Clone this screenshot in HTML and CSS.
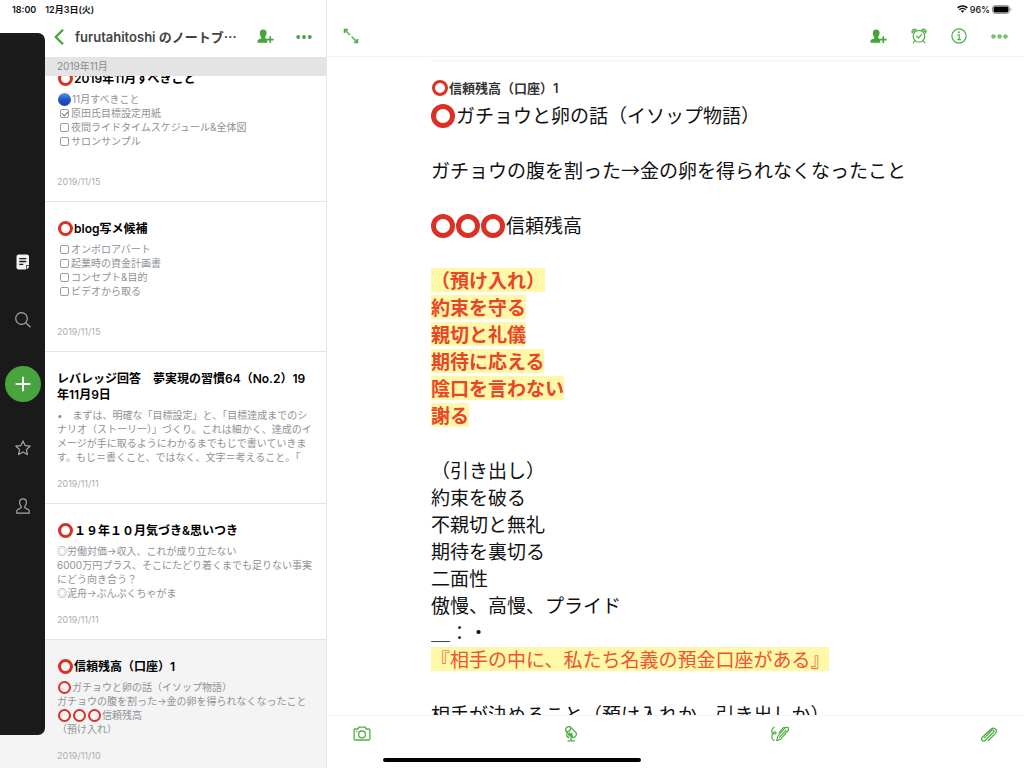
FILE: index.html
```html
<!DOCTYPE html>
<html lang="ja">
<head>
    <meta charset="UTF-8">
    <meta name="viewport" content="width=device-width, initial-scale=1.0">
    <title>信頼残高（口座）1</title>
    <link rel="stylesheet" href="styles.css">
</head>
<body>

    <div class="app">
        <div class="status-bar">
            <span class="status-time">18:00</span>
            <span>12月3日(火)</span>
            <span class="status-right">
                <svg width="11" height="8" viewBox="0 0 11 8" fill="none" stroke="#111" stroke-width="1.5">
                    <path d="M0.6 2.9a7 7 0 0 1 9.8 0M2.3 4.8a4.6 4.6 0 0 1 6.4 0"/>
                    <path d="M5.5 7.8L3.8 6.1a2.5 2.5 0 0 1 3.4 0z" fill="#111" stroke="none"/>
                </svg>
                <span>96%</span>
                <svg width="20" height="9" viewBox="0 0 20 9">
                    <rect x="0.5" y="0.5" width="17" height="8" rx="2.4" fill="none" stroke="#999"/>
                    <rect x="1.5" y="1.5" width="15" height="6" rx="1.4" fill="#000"/>
                    <path d="M18.5 3v3q1-.4 1-1.5t-1-1.5z" fill="#999"/>
                </svg>
            </span>
        </div>

        <div class="rail-column">
            <nav class="rail">
                <button class="rail-btn" aria-label="ノート">
                    <svg width="14" height="16" viewBox="0 0 14 16">
                        <path d="M2.5 0.5h8.500a2 2 0 0 1 2 2v8.700h-3v4.300H2.500a2 2 0 0 1-2-2v-11a2 2 0 0 1 2-2z" fill="#f2f2f2"/>
                        <path d="M10.700 12h2.500q-.2 2.500-2.500 3.300z" fill="#f2f2f2"/>
                        <path d="M3.300 4.600h7M3.300 7.500h7M3.300 10.400h4" stroke="#1a1a1a" stroke-width="1.300"/>
                    </svg>
                </button>
                <button class="rail-btn" aria-label="検索">
                    <svg width="16" height="16" viewBox="0 0 16 16" fill="none" stroke="#a6a6a6" stroke-width="1.2">
                        <circle cx="6.500" cy="6.500" r="5.800"/>
                        <path d="M10.700 10.700l4.800 4.500"/>
                    </svg>
                </button>
                <button class="rail-btn rail-add" aria-label="新規ノート">
                    <svg width="16" height="16" viewBox="0 0 16 16" stroke="#fff" stroke-width="2" stroke-linecap="round">
                        <path d="M8 1.4v13.200M1.400 8h13.200"/>
                    </svg>
                </button>
                <button class="rail-btn" aria-label="ショートカット">
                    <svg width="16" height="16" viewBox="0 0 16 16" fill="none" stroke="#a6a6a6" stroke-width="1.2" stroke-linejoin="round">
                        <path d="M8 0.900l2.100 4.700 5 .6-3.700 3.400 1 5L8 12.100l-4.400 2.500 1-5L0.900 6.200l5-.6z"/>
                    </svg>
                </button>
                <button class="rail-btn" aria-label="アカウント">
                    <svg width="14" height="16" viewBox="0 0 14 16" fill="none" stroke="#a6a6a6" stroke-width="1.2" stroke-linejoin="round">
                        <path d="M5.400 9.600C5.400 8.300 3.600 7 3.600 4.400A3.400 3.600 0 0 1 10.400 4.400C10.400 7 8.600 8.300 8.600 9.600C8.600 10.600 13.200 10.700 13.200 12.800V15.200H0.800V12.800C0.800 10.700 5.400 10.600 5.400 9.600z"/>
                    </svg>
                </button>
            </nav>
        </div>

        <aside class="sidebar">
            <header class="sidebar-header">
                <button class="icon-btn" aria-label="戻る">
                    <svg width="10" height="16" viewBox="0 0 10 16" fill="none" stroke="#45a43c" stroke-width="2.300">
                        <path d="M9 0.800L1.800 8L9 15.200"/>
                    </svg>
                </button>
                <h2 class="notebook-name">furutahitoshi <span class="kana">のノートブ…</span></h2>
                <button class="icon-btn" aria-label="共有">
                    <svg width="17" height="15" viewBox="0 0 17 15" fill="#45a43c">
                        <path d="M6.200 0.500c2.300 0 3.400 1.500 3.400 3.500 0 2-.8 3-1.300 3.700-.4 1 .2 1.700 1.200 2.100l.9.400v3.600H0.500v-1.500c0-1.500 1-1.900 2.200-2.300 1.300-.4 2-.8 1.400-2.100C3.500 7.100 2.800 6 2.800 4c0-2 1.100-3.500 3.400-3.500z"/>
                        <path d="M13.300 7.300v6.600M10 10.600h6.600" stroke="#fff" stroke-width="3.400"/>
                        <path d="M13.300 7.300v6.600M10 10.600h6.600" stroke="#45a43c" stroke-width="1.600"/>
                    </svg>
                </button>
                <button class="icon-btn" aria-label="その他">
                    <svg width="16" height="4" viewBox="0 0 16 4" fill="#45a43c">
                        <circle cx="2.200" cy="2" r="1.900"/><circle cx="8" cy="2" r="1.900"/><circle cx="13.800" cy="2" r="1.900"/>
                    </svg>
                </button>
            </header>
            <div class="month">2019年11月</div>

            <div class="note-list">
                <article class="note">
                    <h3><i class="ring"></i>2019年11月すべきこと</h3>
                    <div class="snippet tasks">
                        <p><i class="ball"></i>11月すべきこと</p>
                        <label><input type="checkbox" checked>原田氏目標設定用紙</label>
                        <label><input type="checkbox">夜間ライドタイムスケジュール&amp;全体図</label>
                        <label><input type="checkbox">サロンサンプル</label>
                    </div>
                    <time>2019/11/15</time>
                </article>
                <article class="note">
                    <h3><i class="ring"></i>blog写メ候補</h3>
                    <div class="snippet tasks">
                        <label><input type="checkbox">オンボロアパート</label>
                        <label><input type="checkbox">起業時の資金計画書</label>
                        <label><input type="checkbox">コンセプト&amp;目的</label>
                        <label><input type="checkbox">ビデオから取る</label>
                    </div>
                    <time>2019/11/15</time>
                </article>
                <article class="note">
                    <h3>レバレッジ回答　夢実現の習慣64（No.2）19<br>年11月9日</h3>
                    <div class="snippet">
                        <p>•　まずは、明確な「目標設定」と、「目標達成までのシ</p>
                        <p>ナリオ（ストーリー）」づくり。これは細かく、達成のイ</p>
                        <p>メージが手に取るようにわかるまでもじで書いていきま</p>
                        <p>す。もじ＝書くこと、ではなく、文字＝考えること。「</p>
                    </div>
                    <time>2019/11/11</time>
                </article>
                <article class="note">
                    <h3><i class="ring"></i>１９年１０月気づき&amp;思いつき</h3>
                    <div class="snippet">
                        <p>◎労働対価→収入、これが成り立たない</p>
                        <p>6000万円プラス、そこにたどり着くまでも足りない事実</p>
                        <p>にどう向き合う？</p>
                        <p>◎泥舟→ぶんぷくちゃがま</p>
                    </div>
                    <time>2019/11/11</time>
                </article>
                <article class="note selected">
                    <h3><i class="ring"></i>信頼残高（口座）1</h3>
                    <div class="snippet">
                        <p><i class="ring"></i>ガチョウと卵の話（イソップ物語）</p>
                        <p>ガチョウの腹を割った→金の卵を得られなくなったこと</p>
                        <p><i class="ring"></i><i class="ring"></i><i class="ring"></i>信頼残高</p>
                        <p>（預け入れ）</p>
                    </div>
                    <time>2019/11/10</time>
                </article>
            </div>
        </aside>

        <main class="editor">
            <header class="editor-header">
                <button class="icon-btn expand" aria-label="全画面">
                    <svg width="16" height="16" viewBox="0 0 16 16" fill="none" stroke="#4fae47" stroke-width="1.400">
                        <path d="M1.500 1.500l5.500 5.500M8.600 8.600l5.900 5.900"/>
                        <path d="M1.600 5V1.600H5M14.400 11v3.400H11" stroke-width="1.800"/>
                    </svg>
                </button>
                <button class="icon-btn" aria-label="共有">
                    <svg width="17" height="15" viewBox="0 0 17 15" fill="#45a43c">
                        <path d="M6.200 0.500c2.300 0 3.400 1.500 3.400 3.500 0 2-.8 3-1.300 3.700-.4 1 .2 1.700 1.200 2.100l.9.400v3.600H0.500v-1.500c0-1.500 1-1.900 2.200-2.300 1.300-.4 2-.8 1.400-2.100C3.500 7.100 2.800 6 2.800 4c0-2 1.100-3.500 3.400-3.500z"/>
                        <path d="M13.300 7.300v6.600M10 10.600h6.600" stroke="#fff" stroke-width="3.400"/>
                        <path d="M13.300 7.300v6.600M10 10.600h6.600" stroke="#45a43c" stroke-width="1.600"/>
                    </svg>
                </button>
                <button class="icon-btn" aria-label="リマインダー">
                    <svg width="16" height="16" viewBox="0 0 16 16" fill="none" stroke="#4fae47" stroke-width="1.200" stroke-linecap="round">
                        <circle cx="8" cy="8.200" r="5.800"/>
                        <path d="M5.500 8.200l1.900 1.900 3.300-3.700"/>
                        <path d="M1.200 4.700C0.300 2 2.600 0.500 5 1.500zM14.800 4.700C15.700 2 13.400 0.500 11 1.500zM3.600 12.800L2.200 15M12.400 12.800l1.400 2.200"/>
                    </svg>
                </button>
                <button class="icon-btn" aria-label="情報">
                    <svg width="16" height="16" viewBox="0 0 16 16" fill="none" stroke="#4fae47" stroke-width="1.200">
                        <circle cx="8" cy="8" r="7.100"/>
                        <path d="M6.400 6.800h1.800v4.800M6.200 11.700h3.800"/>
                        <circle cx="7.900" cy="4.300" r="1" fill="#4fae47" stroke="none"/>
                    </svg>
                </button>
                <button class="icon-btn" aria-label="その他">
                    <svg width="17" height="5" viewBox="0 0 17 5" fill="#8fcb89" stroke="#4fae47" stroke-width="1">
                        <circle cx="2.500" cy="2.500" r="1.700"/><circle cx="8.500" cy="2.500" r="1.700"/><circle cx="14.500" cy="2.500" r="1.700"/>
                    </svg>
                </button>
            </header>

            <div class="page">
                <h1><i class="ring"></i>信頼残高（口座）1</h1>
                <p><i class="ring"></i>ガチョウと卵の話（イソップ物語）</p>
                <p class="gap">ガチョウの腹を割った→金の卵を得られなくなったこと</p>
                <p class="gap"><i class="ring"></i><i class="ring"></i><i class="ring"></i>信頼残高</p>
                <p class="gap"><mark class="strong">（預け入れ）</mark></p>
                <p><mark class="strong">約束を守る</mark></p>
                <p><mark class="strong">親切と礼儀</mark></p>
                <p><mark class="strong">期待に応える</mark></p>
                <p><mark class="strong">陰口を言わない</mark></p>
                <p><mark class="strong">謝る</mark></p>
                <p class="gap">（引き出し）</p>
                <p>約束を破る</p>
                <p>不親切と無礼</p>
                <p>期待を裏切る</p>
                <p>二面性</p>
                <p>傲慢、高慢、プライド</p>
                <p>＿：・</p>
                <p><mark>『相手の中に、私たち名義の預金口座がある』</mark></p>
                <p class="gap">相手が決めること（預け入れか、引き出しか）</p>
            </div>

            <footer class="toolbar">
                <button class="icon-btn" aria-label="カメラ">
                    <svg width="18" height="16" viewBox="0 0 18 16" fill="none" stroke="#4fae47" stroke-width="1.300">
                        <path d="M2.300 3h2.500l.9-1.900h6.600l.9 1.900h2.500a1.200 1.200 0 0 1 1.200 1.200v8.600a1.200 1.200 0 0 1-1.200 1.200H2.300a1.200 1.200 0 0 1-1.200-1.200V4.200a1.200 1.200 0 0 1 1.200-1.200z"/>
                        <circle cx="9" cy="8.400" r="3.400"/>
                        <path d="M3.200 5.500h1.400"/>
                    </svg>
                </button>
                <button class="icon-btn" aria-label="音声">
                    <svg width="18" height="16" viewBox="0 0 18 16" fill="none" stroke="#4fae47" stroke-width="1.300" stroke-linecap="round" stroke-linejoin="round">
                        <rect x="2.800" y="2.900" width="12.400" height="6.200" rx="3.100" transform="rotate(46 9 6)"/>
                        <path d="M4.600 5.500c2 .4 3.600-.8 4.200-3M5 7.600c-.8 1.600 0 3.400 1.600 4.200M7 10.200l.6-3.200 1.600 2.600.4-2.400 1 4.400M9 11.600v3M5.900 14.800h6.600"/>
                    </svg>
                </button>
                <button class="icon-btn" aria-label="手書き">
                    <svg width="18" height="16" viewBox="0 0 18 16" fill="none" stroke="#4fae47" stroke-width="1.200" stroke-linecap="round" stroke-linejoin="round">
                        <path d="M5.800 14.600l1-4.500 6.800-7.800c1.200-1.400 4.200-1.200 4 .8-.1.900-.6 1.500-1 1.900L9.600 13.200z"/>
                        <path d="M8.400 11.400l6.400-7M8 6.800l4.400-5.200h2"/>
                        <path d="M3.200 1.300C0.800 2.600 0.200 5.400 1.400 7s4 1 3.600-.4-3.200-.8-3.800 1.800c-.7 3 .2 6.200 2 5.800"/>
                    </svg>
                </button>
                <button class="icon-btn" aria-label="添付">
                    <svg width="18" height="16" viewBox="0 0 18 16" fill="none" stroke="#4fae47" stroke-width="1.300" stroke-linecap="round">
                        <path d="M8.400 14.500l6.800-6.900c3-3.300-1-7.400-4.300-4.300L2.400 11.200c-2.200 2.400.8 5.300 3 3.100l8-8.100c1.300-1.400-.4-3.100-1.800-1.700L4.600 11.600"/>
                    </svg>
                </button>
            </footer>
        </main>

        <div class="home-indicator"></div>
    </div>

</body>
</html>
```

FILE: styles.css
```css
* {
    box-sizing: border-box;
}
body {
    margin: 0;
    background-color: #fff;
    font-family: Inter, "Noto Sans CJK JP", sans-serif;
    color: #111;
}
h1, h2, h3, p {
    margin: 0;
}
button {
    padding: 0;
    border: none;
    background: none;
    cursor: pointer;
}
svg {
    display: block;
}
.app {
    position: relative;
    display: flex;
    height: 100vh;
    overflow: hidden;
}

/* status bar lies over both panes */
.status-bar {
    position: absolute;
    z-index: 2;
    top: 0;
    left: 0;
    right: 0;
    display: flex;
    align-items: center;
    gap: 9px;
    height: 18px;
    padding: 0 12px;
    font-size: 9px;
    font-weight: 600;
}
.status-right {
    display: flex;
    align-items: center;
    gap: 2px;
    margin-left: auto;
    font-weight: 500;
}

/* dark rail */
.rail-column {
    display: flex;
    flex: 0 0 45px;
    padding: 33px 0;
    background: linear-gradient(#fff 50%, #f4f4f4 50%);
}
.rail {
    display: flex;
    flex: 1;
    flex-direction: column;
    align-items: center;
    justify-content: center;
    gap: 28px;
    background-color: #1a1a1a;
    border-radius: 0 7px 7px 0;
}
.rail-btn {
    display: flex;
    align-items: center;
    justify-content: center;
    width: 36px;
    height: 30px;
}
.rail-add {
    height: 36px;
    margin: 3px 0;
    border-radius: 50%;
    background-color: #48a43f;
}

/* note list */
.sidebar {
    display: flex;
    flex: 0 0 282px;
    flex-direction: column;
    border-right: 1px solid #e6e6e6;
    overflow: hidden;
}
.sidebar-header {
    position: relative;
    z-index: 1;
    display: flex;
    flex: none;
    align-items: center;
    height: 57px;
    padding: 16px 14px 0 9px;
    background-color: #fff;
}
.notebook-name {
    flex: 1;
    margin-left: 11px;
    color: #444;
    font-size: 13px;
    font-weight: 600;
    white-space: nowrap;
}
.kana {
    font-family: "Noto Sans CJK JP", sans-serif;
}
.sidebar-header .icon-btn + .icon-btn {
    margin-left: 22px;
}
.month {
    position: relative;
    z-index: 1;
    flex: none;
    height: 19px;
    padding-left: 12px;
    background-color: #e4e4e4;
    color: #8a8a8e;
    font-size: 10px;
    line-height: 19px;
}
/* list is scrolled a little under the month bar */
.note-list {
    flex: 1;
    margin-top: -24px;
}
.note {
    padding: 19px 0 13px 12px;
    border-bottom: 1px solid #e4e4e4;
    white-space: nowrap;
}
.note.selected {
    background-color: #f4f4f4;
    border-bottom: none;
    padding-bottom: 40px;
}
.note h3 {
    margin-bottom: 5px;
    color: #000;
    font-size: 12px;
    font-weight: 600;
    line-height: 16px;
}
.snippet {
    margin-bottom: 14px;
    color: #8f9296;
    font-size: 10px;
    line-height: 14px;
}
.snippet p, .snippet label {
    display: flex;
    align-items: center;
    height: 14px;
}
.tasks {
    min-height: 70px;
}
.snippet input {
    appearance: none;
    width: 9px;
    height: 9px;
    margin: 0 2px 0 3px;
    border: 1px solid #9a9da0;
    border-radius: 2px;
}
.snippet input:checked::before {
    content: "";
    display: block;
    width: 5px;
    height: 3px;
    margin: 1px;
    border-left: 1px solid #77797c;
    border-bottom: 1px solid #77797c;
    transform: rotate(-45deg);
}
.note time {
    display: block;
    color: #adadad;
    font-size: 9px;
    line-height: 12px;
}

/* red circle and blue ball marks */
.ring {
    display: inline-block;
    flex: none;
    width: 15px;
    height: 15px;
    margin: 0 1px;
    border: 3px solid #da3025;
    border-radius: 50%;
    vertical-align: middle;
}
.note h3 .ring {
    margin-top: -2px;
}
.snippet .ring {
    width: 13px;
    height: 13px;
    border-width: 2px;
}
.ball {
    width: 13px;
    height: 13px;
    margin: 0 1px;
    border-radius: 50%;
    background: linear-gradient(#5c93ee, #1f55c9 50%, #1a3fa6);
}

/* editor */
.editor {
    display: flex;
    flex: 1;
    flex-direction: column;
    min-width: 0;
}
.editor-header {
    display: flex;
    flex: none;
    align-items: center;
    gap: 24px;
    height: 57px;
    padding: 16px 16px 0 16px;
    border-bottom: 1px solid #f3f3f3;
}
.expand {
    margin-right: auto;
}
.page {
    flex: 1;
    min-height: 0;
    margin: 3px 104px 0;
    border-top: 2px solid #f7f7f7;
    overflow: hidden;
    font-family: "Noto Sans CJK JP", sans-serif;
    font-size: 19px;
    line-height: 27px;
    white-space: nowrap;
}
.page h1 {
    margin: 16px 0 3px;
    color: #333;
    font-family: Inter, "Noto Sans CJK JP", sans-serif;
    font-size: 13px;
    font-weight: 600;
    line-height: 20px;
}
.page p {
    height: 27px;
}
.page p.gap {
    margin-top: 28px;
}
.page .ring {
    width: 24px;
    height: 24px;
    margin: -4px 1px 0 0;
    border-width: 5px;
}
.page h1 .ring {
    width: 16px;
    height: 16px;
    margin: -2px 1px 0;
    border-width: 3px;
}
mark {
    display: inline-block;
    height: 24px;
    background-color: #fff8a8;
    color: #f0532f;
    line-height: 24px;
}
mark.strong {
    color: #e8452a;
    font-weight: 700;
}
.toolbar {
    display: flex;
    flex: none;
    align-items: flex-start;
    justify-content: space-between;
    height: 53px;
    padding: 10px 26px 0;
    border-top: 1px solid #f3f3f3;
}
.home-indicator {
    position: absolute;
    bottom: 6px;
    left: 50%;
    width: 258px;
    height: 4px;
    margin-left: -129px;
    border-radius: 2px;
    background-color: #000;
}
```
